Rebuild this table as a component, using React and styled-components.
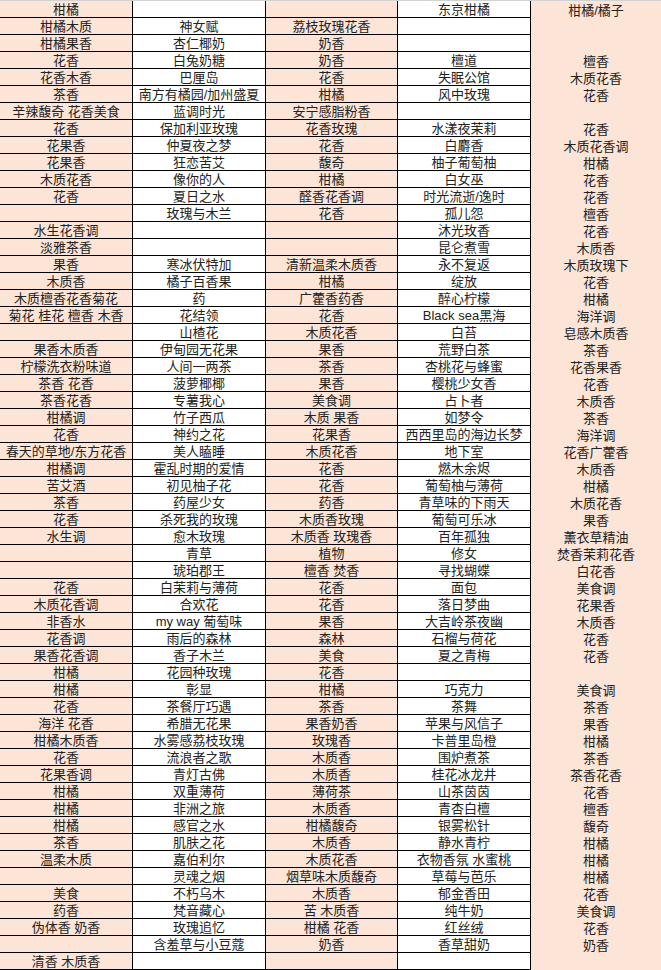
import React from 'react';
import styled, { createGlobalStyle } from 'styled-components';

const GlobalStyle = createGlobalStyle`
  html, body {
    margin: 0;
    padding: 0;
    background: #fff;
  }
  * {
    box-sizing: border-box;
  }
`;

const rows = [
  ['柑橘', '', '', '东京柑橘', '柑橘/橘子'],
  ['柑橘木质', '神女赋', '荔枝玫瑰花香', '', ''],
  ['柑橘果香', '杏仁椰奶', '奶香', '', ''],
  ['花香', '白兔奶糖', '奶香', '檀道', '檀香'],
  ['花香木香', '巴厘岛', '花香', '失眠公馆', '木质花香'],
  ['茶香', '南方有橘园/加州盛夏', '柑橘', '风中玫瑰', '花香'],
  ['辛辣馥奇 花香美食', '蓝调时光', '安宁感脂粉香', '', ''],
  ['花香', '保加利亚玫瑰', '花香玫瑰', '水漾夜茉莉', '花香'],
  ['花果香', '仲夏夜之梦', '花香', '白麝香', '木质花香调'],
  ['花果香', '狂恋苦艾', '馥奇', '柚子葡萄柚', '柑橘'],
  ['木质花香', '像你的人', '柑橘', '白女巫', '花香'],
  ['花香', '夏日之水', '醛香花香调', '时光流逝/逸时', '花香'],
  ['', '玫瑰与木兰', '花香', '孤儿怨', '檀香'],
  ['水生花香调', '', '', '沐光玫香', '花香'],
  ['淡雅茶香', '', '', '昆仑煮雪', '木质香'],
  ['果香', '寒冰伏特加', '清新温柔木质香', '永不复返', '木质玫瑰下'],
  ['木质香', '橘子百香果', '柑橘', '绽放', '花香'],
  ['木质檀香花香菊花', '药', '广藿香药香', '醉心柠檬', '柑橘'],
  ['菊花 桂花 檀香 木香', '花结领', '花香', 'Black sea黑海', '海洋调'],
  ['', '山楂花', '木质花香', '白苔', '皂感木质香'],
  ['果香木质香', '伊甸园无花果', '果香', '荒野白茶', '茶香'],
  ['柠檬洗衣粉味道', '人间一两茶', '茶香', '杏桃花与蜂蜜', '花香果香'],
  ['茶香 花香', '菠萝椰椰', '果香', '樱桃少女香', '花香'],
  ['茶香花香', '专薯我心', '美食调', '占卜者', '木质香'],
  ['柑橘调', '竹子西瓜', '木质 果香', '如梦令', '茶香'],
  ['花香', '神约之花', '花果香', '西西里岛的海边长梦', '海洋调'],
  ['春天的草地/东方花香', '美人瞌睡', '木质花香', '地下室', '花香广藿香'],
  ['柑橘调', '霍乱时期的爱情', '花香', '燃木余烬', '木质香'],
  ['苦艾酒', '初见柚子花', '花香', '葡萄柚与薄荷', '柑橘'],
  ['茶香', '药屋少女', '药香', '青草味的下雨天', '木质花香'],
  ['花香', '杀死我的玫瑰', '木质香玫瑰', '葡萄可乐冰', '果香'],
  ['水生调', '愈木玫瑰', '木质香 玫瑰香', '百年孤独', '薰衣草精油'],
  ['', '青草', '植物', '修女', '焚香茉莉花香'],
  ['', '琥珀郡王', '檀香 焚香', '寻找蝴蝶', '白花香'],
  ['花香', '白茉莉与薄荷', '花香', '面包', '美食调'],
  ['木质花香调', '合欢花', '花香', '落日梦曲', '花果香'],
  ['非香水', 'my way 葡萄味', '果香', '大吉岭茶夜幽', '木质香'],
  ['花香调', '雨后的森林', '森林', '石榴与荷花', '花香'],
  ['果香花香调', '香子木兰', '美食', '夏之青梅', '花香'],
  ['柑橘', '花园种玫瑰', '花香', '', ''],
  ['柑橘', '彰显', '柑橘', '巧克力', '美食调'],
  ['花香', '茶餐厅巧遇', '茶香', '茶舞', '茶香'],
  ['海洋 花香', '希腊无花果', '果香奶香', '苹果与风信子', '果香'],
  ['柑橘木质香', '水雾感荔枝玫瑰', '玫瑰香', '卡普里岛橙', '柑橘'],
  ['花香', '流浪者之歌', '木质香', '围炉煮茶', '茶香'],
  ['花果香调', '青灯古佛', '木质香', '桂花冰龙井', '茶香花香'],
  ['柑橘', '双重薄荷', '薄荷茶', '山茶茵茵', '花香'],
  ['柑橘', '非洲之旅', '木质香', '青杏白檀', '檀香'],
  ['柑橘', '感官之水', '柑橘馥奇', '银雾松针', '馥奇'],
  ['茶香', '肌肤之花', '木质香', '静水青柠', '柑橘'],
  ['温柔木质', '嘉伯利尔', '木质花香', '衣物香氛 水蜜桃', '柑橘'],
  ['', '灵魂之烟', '烟草味木质馥奇', '草莓与芭乐', '柑橘'],
  ['美食', '不朽乌木', '木质香', '郁金香田', '花香'],
  ['药香', '梵音藏心', '苦 木质香', '纯牛奶', '美食调'],
  ['伪体香 奶香', '玫瑰追忆', '柑橘 花香', '红丝绒', '花香'],
  ['', '含羞草与小豆蔻', '奶香', '香草甜奶', '奶香'],
  ['清香 木质香', '', '', '', ''],
];

// spreadsheet-like grid: 4 ruled columns + one open column on the right
const Sheet = styled.div`
  width: 661px;
  border-top: 1px solid #d2d2d2;
  font-family: "Liberation Sans", "Noto Sans CJK SC", sans-serif;
  font-size: 13px;
  color: #222;
`;

const Row = styled.div`
  display: grid;
  grid-template-columns: 133px 133px 132px 133px 1fr;
  height: 17px;
`;

const Cell = styled.div`
  display: flex;
  align-items: center;
  justify-content: center;
  padding-top: 2px;
  white-space: nowrap;
  line-height: 14px;
  background: ${(p) => (p.$tinted ? '#fce4d6' : '#fff')};
  border-right: ${(p) => (p.$ruled ? '1px solid #000' : 'none')};
  border-bottom: ${(p) => (p.$ruled ? '1px solid #000' : 'none')};
`;

const App = () => {
  return (
    <>
      <GlobalStyle />
      <Sheet>
        {rows.map((row, i) => (
          <Row key={i}>
            {row.map((text, col) => (
              <Cell key={col} $tinted={col % 2 === 0} $ruled={col < 4}>
                {text}
              </Cell>
            ))}
          </Row>
        ))}
      </Sheet>
    </>
  );
};

export default App;
